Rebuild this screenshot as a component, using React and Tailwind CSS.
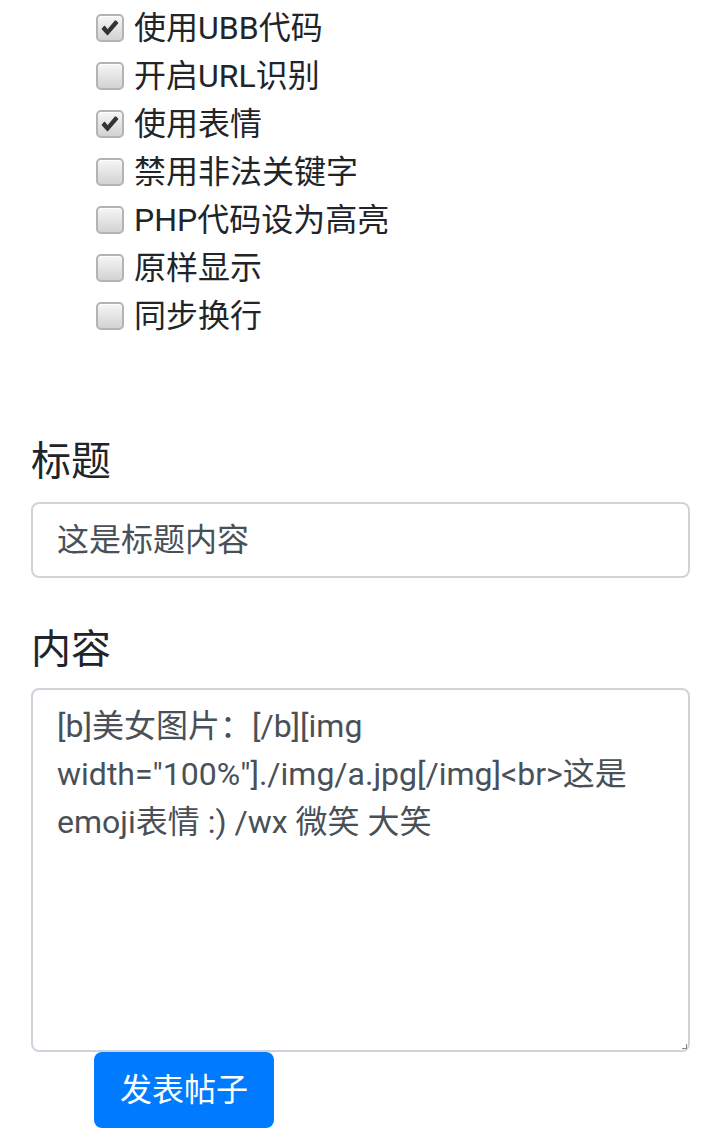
import React, { useState } from "react";

const options = [
  { label: "使用UBB代码", checked: true },
  { label: "开启URL识别", checked: false },
  { label: "使用表情", checked: true },
  { label: "禁用非法关键字", checked: false },
  { label: "PHP代码设为高亮", checked: false },
  { label: "原样显示", checked: false },
  { label: "同步换行", checked: false },
];

const font = {
  fontFamily: 'Roboto, "Noto Sans CJK SC", sans-serif',
};

const Check = ({ checked }) => (
  <span className="flex h-[28px] w-[28px] items-center justify-center rounded-[5px] border-2 border-[#b4b4b4] bg-linear-to-b from-[#f6f6f6] to-[#d2d2d2] shadow-[inset_0_1px_0_#fff]">
    {checked && (
      <svg viewBox="0 0 20 20" className="h-[20px] w-[20px]">
        <path
          d="M2.5 11 L7.5 16.5 L17.5 5 L15.5 3 L7.5 12.5 L4.5 8.5 Z"
          fill="#333"
          stroke="#333"
          strokeWidth="1.6"
          strokeLinejoin="round"
        />
      </svg>
    )}
  </span>
);

const App = () => {
  const [title] = useState("这是标题内容");
  const content =
    '[b]美女图片：[/b][img width="100%"]./img/a.jpg[/img]<br>这是emoji表情 :) /wx 微笑 大笑';

  return (
    <div className="w-[720px] bg-white pb-2" style={font}>
      <div className="pl-[96px] pt-[4px]">
        {options.map((o) => (
          <label key={o.label} className="flex h-[48px] items-center gap-[10px] text-[32px] text-[#212529]">
            <Check checked={o.checked} />
            <span>{o.label}</span>
          </label>
        ))}
      </div>

      <div className="pl-[31px] pr-[30px]">
        <div className="mt-[98px] mb-[16px] text-[40px] leading-[48px] text-[#212529]">标题</div>
        <div className="flex h-[76px] items-center rounded-[8px] border-2 border-[#ced4da] px-[24px] text-[32px] text-[#495057]">
          {title}
        </div>

        <div className="mt-[48px] mb-[14px] text-[40px] leading-[48px] text-[#212529]">内容</div>
        <div className="relative h-[364px] rounded-[8px] border-2 border-[#ced4da] px-[24px] py-[12px] text-[32px] leading-[48px] text-[#495057]">
          <div style={{ overflowWrap: "anywhere" }}>{content}</div>
          <span className="absolute bottom-[1px] right-[1px] h-[5px] w-[5px] border-r border-b border-[#888]" />
        </div>
      </div>

      <div className="pl-[94px]">
        <button className="h-[76px] rounded-[8px] bg-[#007bff] px-[26px] text-[32px] text-white">
          发表帖子
        </button>
      </div>
    </div>
  );
};

export default App;
